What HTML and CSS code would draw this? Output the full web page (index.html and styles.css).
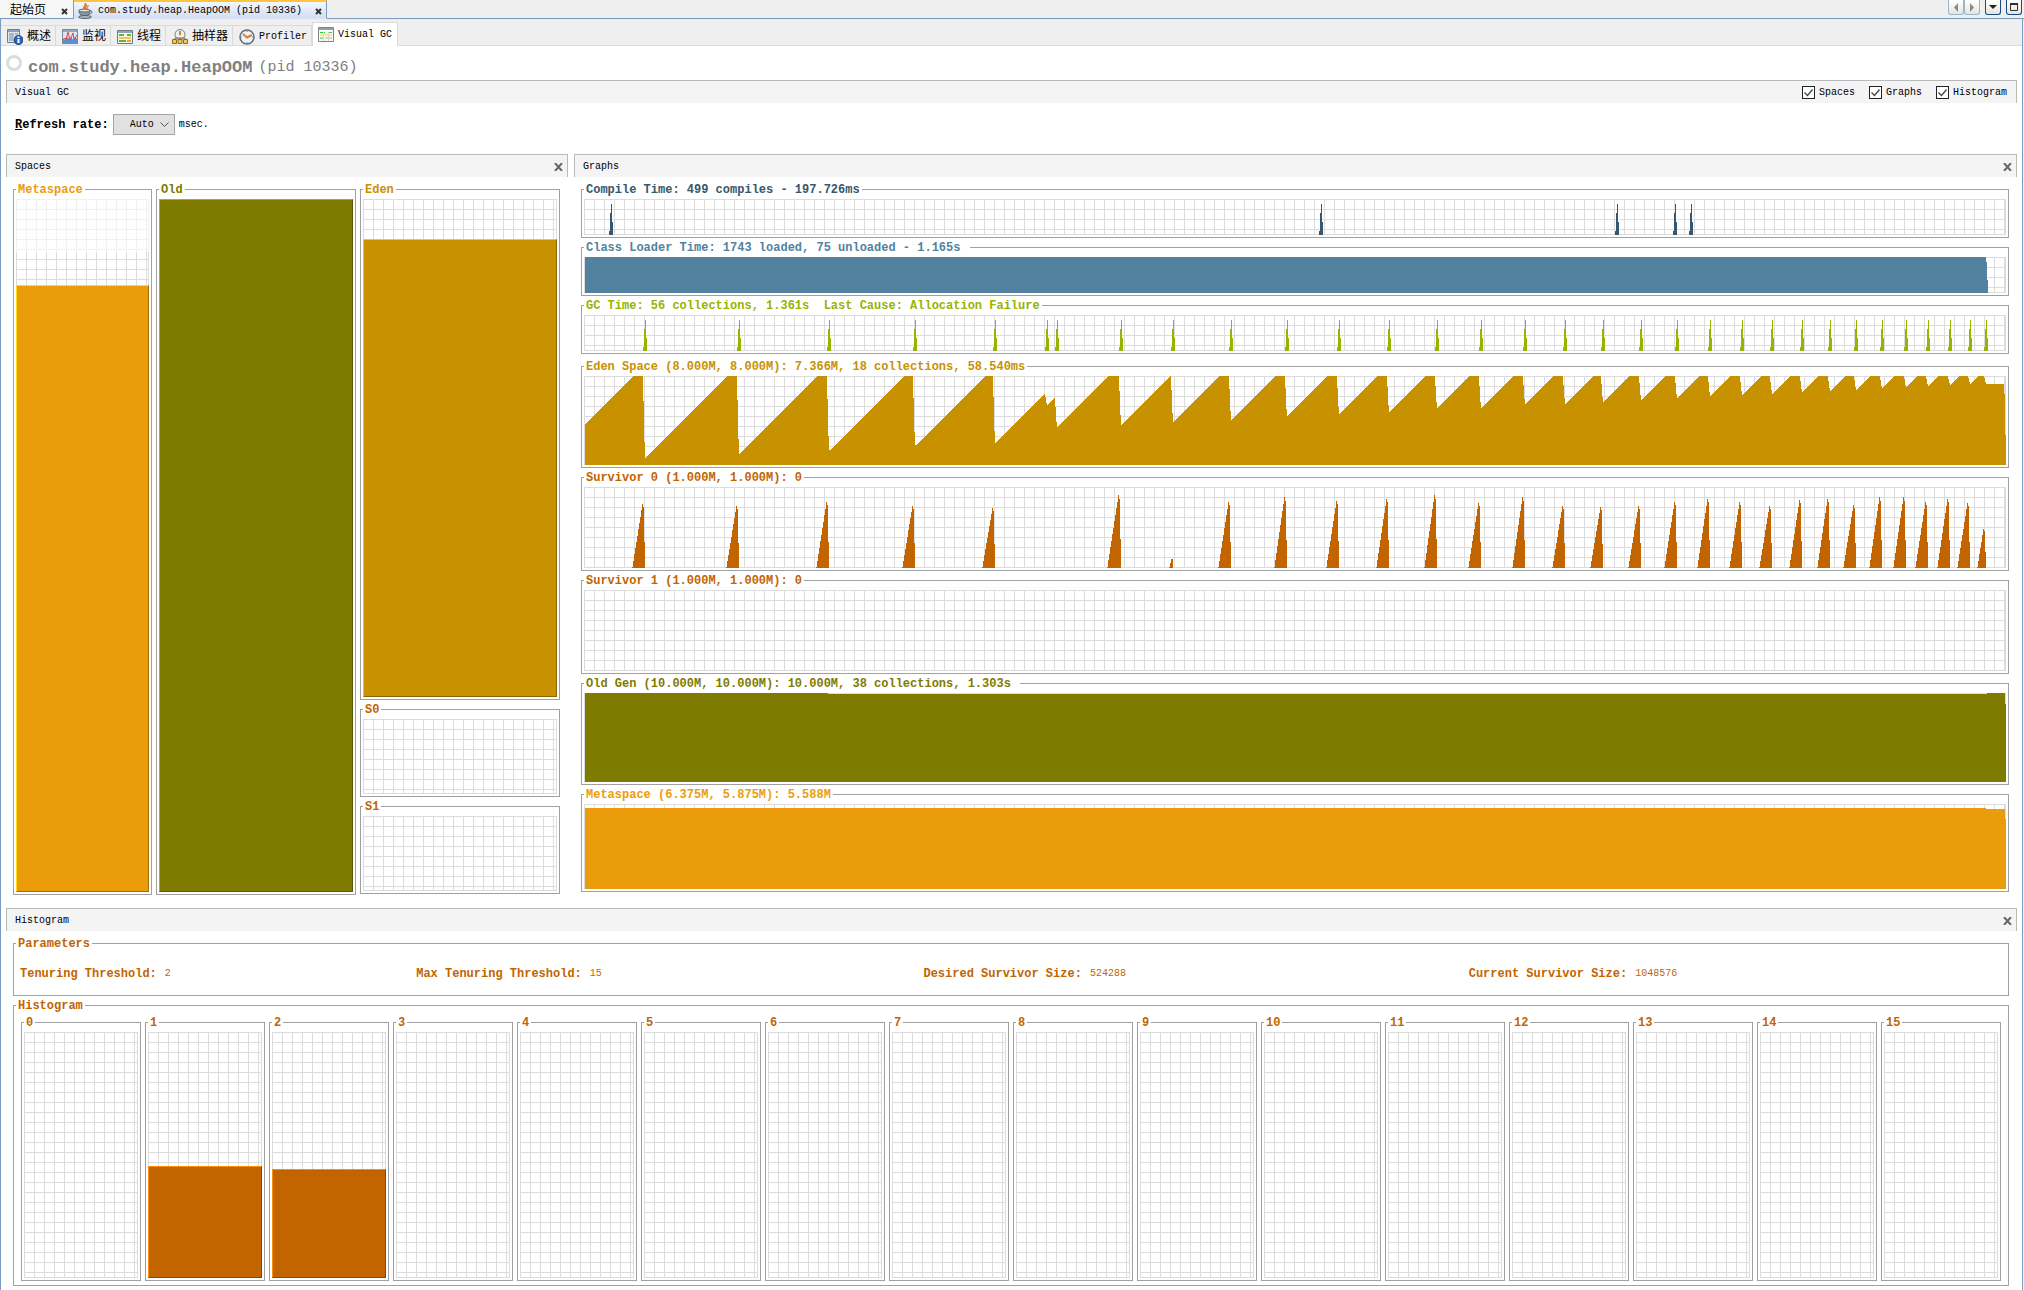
FILE: index.html
```html
<!DOCTYPE html>
<html lang="zh-CN">
<head>
<meta charset="utf-8">
<meta name="viewport" content="width=device-width, initial-scale=1">
<title>Visual GC</title>
<link rel="stylesheet" href="styles.css">
</head>
<body>
<header class="doc-bar">
  <div class="doc-tab">
    <a class="doc-link" href="#start">起始页</a>
    <button class="close" aria-label="关闭"><svg width="7" height="7" viewBox="0 0 7 7"><path d="M1 1l5 5M6 1l-5 5" stroke="#333" stroke-width="2"/></svg></button>
  </div>
  <div class="doc-tab doc-tab-active">
    <svg width="16" height="16" viewBox="0 0 16 16"><path d="M1 7h11c0 4-2 6-5.500 6S1 11 1 7z" fill="#8696a0" stroke="#4b5a63"/><ellipse cx="6.500" cy="7.500" rx="5" ry="1.500" fill="#dfe6ea" stroke="#5c6b74"/><path d="M12 8c3-1 3 3-1 3" fill="none" stroke="#5c6b74"/><ellipse cx="7" cy="14" rx="6.500" ry="1.500" fill="#a9b6bf" stroke="#56656e"/><path d="M6 6c-2-2 2-3 1-6 3 2 0 4 1 6zM9 6c-1-2 2-2 1-4" fill="#f08228" stroke="#dd6a12"/></svg>
    <a class="doc-link" href="#heap">com.study.heap.HeapOOM (pid 10336)</a>
    <button class="close" aria-label="关闭"><svg width="7" height="7" viewBox="0 0 7 7"><path d="M1 1l5 5M6 1l-5 5" stroke="#333" stroke-width="2"/></svg></button>
  </div>
  <div class="doc-tools">
    <div class="pair">
      <button class="tool" aria-label="向左滚动"><svg width="8" height="9" viewBox="0 0 8 9"><path d="M6 0v9L2 4.500z" fill="#8a8a8a"/></svg></button>
      <button class="tool" aria-label="向右滚动"><svg width="8" height="9" viewBox="0 0 8 9"><path d="M2 0v9l4-4.500z" fill="#8a8a8a"/></svg></button>
    </div>
    <button class="tool tool-strong" aria-label="文档列表"><svg width="8" height="4" viewBox="0 0 8 4"><path d="M0 0h8L4 4z" fill="#222"/></svg></button>
    <button class="tool tool-strong" aria-label="最大化"><svg width="8" height="8" viewBox="0 0 8 8"><path d="M.5 1h7v6.500h-7z" fill="none" stroke="#333"/><path d="M0 1h8" stroke="#333" stroke-width="2"/></svg></button>
  </div>
</header>

<div class="window">
  <nav class="views" role="tablist">
    <button class="view" role="tab"><svg width="16" height="16" viewBox="0 0 16 16"><path d="M.5.500h12v13H.5z" fill="#dce4ec" stroke="#6f7f8e"/><path d="M1 2h11" stroke="#8fa4ba" stroke-width="2"/><path d="M2 5h5M2 7h5M2 9h4M2 11h4M8 5h3" stroke="#7a8ea3"/><circle cx="11.500" cy="11" r="4.500" fill="#3163b5" stroke="#1f438a"/><path d="M11.500 10v4M11.500 7.500v1.500" stroke="#fff" stroke-width="2"/></svg>概述</button>
    <button class="view" role="tab"><svg width="16" height="16" viewBox="0 0 16 16"><path d="M.5.500h15v14H.5z" fill="#dbe7f2" stroke="#77889a"/><path d="M1 2h14" stroke="#8fa9c4" stroke-width="2"/><path d="M1 14V9l2 2 2-3 2 2 2-2 2 3 2-3 2 2v4z" fill="#5d8fd0"/><path d="M1 11l2-2 1 2 2-8 2 8 1-2 2-5 1 7 3-5" fill="none" stroke="#d8484a"/></svg>监视</button>
    <button class="view" role="tab"><svg width="16" height="14" viewBox="0 0 16 14"><path d="M.5.500h15v13H.5z" fill="#f4f4ee" stroke="#6c7c88"/><path d="M1 2h14" stroke="#91a5b9" stroke-width="2"/><path d="M2 5h5M10 5h4" stroke="#5ab82c" stroke-width="2"/><path d="M2 8h12" stroke="#f0c84a" stroke-width="2"/><path d="M2 11h7" stroke="#5ab82c" stroke-width="2"/><path d="M10 11h4" stroke="#e8a33a" stroke-width="2"/></svg>线程</button>
    <button class="view" role="tab"><svg width="16" height="16" viewBox="0 0 16 16"><circle cx="8" cy="5.500" r="5" fill="#e8f0f6" stroke="#70808e"/><path d="M8 2v4" stroke="#e57a20" stroke-width="2"/><path d="M3 10v-1h10v1M8 9v1" fill="none" stroke="#8a6a2a"/><path d="M.5 10.500h4v4h-4zM6 10.500h4v4H6zM11.500 10.500h4v4h-4z" fill="#f5c65a" stroke="#96681a"/></svg>抽样器</button>
    <button class="view view-latin" role="tab"><svg width="16" height="16" viewBox="0 0 16 16"><circle cx="8" cy="8" r="7" fill="#eef3f8" stroke="#5f6e7b" stroke-width="1.500"/><path d="M8 2v1M8 13v1M2 8h1M13 8h1" stroke="#7a8792"/><path d="M4 5l4 3.500L13 6" fill="none" stroke="#e07b38" stroke-width="2"/></svg>Profiler</button>
    <button class="view view-latin view-active" role="tab" aria-selected="true"><svg width="16" height="15" viewBox="0 0 16 15"><path d="M.5.500h15v14H.5z" fill="#fafaf4" stroke="#7c858c"/><path d="M1 2h14" stroke="#93a1ae" stroke-width="2"/><path d="M2 5.500h5M10 5.500h4" stroke="#2fd02f"/><path d="M2 8h12" stroke="#e8d870"/><path d="M2 11h4" stroke="#2fd02f"/><path d="M7 11h7" stroke="#f0a850"/><path d="M5.500 5v9M10.500 5v9" stroke="#d8d8d0"/></svg>Visual GC</button>
  </nav>

  <main class="content">
    <h1 class="title"><span class="ring"></span><b>com.study.heap.HeapOOM</b><span class="pid">(pid 10336)</span></h1>

    <div class="bar">
      <h2 class="bar-title">Visual GC</h2>
      <div class="toggles">
        <label class="toggle"><input type="checkbox" checked>Spaces</label>
        <label class="toggle"><input type="checkbox" checked>Graphs</label>
        <label class="toggle"><input type="checkbox" checked>Histogram</label>
      </div>
    </div>

    <div class="refresh">
      <label class="refresh-label" for="rate"><u>R</u>efresh rate:</label>
      <select id="rate" class="rate"><option>Auto</option></select>
      <span>msec.</span>
    </div>

    <div class="panels">
      <section>
        <div class="bar"><h2 class="bar-title">Spaces</h2><button class="close" aria-label="Close Spaces"><svg width="9" height="8" viewBox="0 0 9 8"><path d="M1 0l7 8M8 0L1 8" stroke="#666" stroke-width="2"/></svg></button></div>
        <div class="spaces">
          <fieldset class="box c-meta"><legend>Metaspace</legend><div class="grid reserved"><div class="fill" style="height:87.6%"></div></div></fieldset>
          <fieldset class="box c-old"><legend>Old</legend><div class="grid"><div class="fill" style="height:100%"></div></div></fieldset>
          <div class="young">
            <fieldset class="box grow c-eden"><legend>Eden</legend><div class="grid"><div class="fill" style="height:92%"></div></div></fieldset>
            <fieldset class="box c-surv"><legend>S0</legend><div class="grid survivor"></div></fieldset>
            <fieldset class="box c-surv"><legend>S1</legend><div class="grid survivor"></div></fieldset>
          </div>
        </div>
      </section>

      <section>
        <div class="bar"><h2 class="bar-title">Graphs</h2><button class="close" aria-label="Close Graphs"><svg width="9" height="8" viewBox="0 0 9 8"><path d="M1 0l7 8M8 0L1 8" stroke="#666" stroke-width="2"/></svg></button></div>
        <div class="graphs">
          <fieldset class="box c-compile"><legend>Compile Time: 499 compiles - 197.726ms</legend><div class="grid"><svg class="plot h36" data-plot="compile" viewBox="0 0 1422 36" preserveAspectRatio="none"></svg></div></fieldset>
          <fieldset class="box c-class"><legend>Class Loader Time: 1743 loaded, 75 unloaded - 1.165s&nbsp;</legend><div class="grid"><svg class="plot h36" data-plot="classes" viewBox="0 0 1422 36" preserveAspectRatio="none"></svg></div></fieldset>
          <fieldset class="box c-gc"><legend>GC Time: 56 collections, 1.361s&nbsp; Last Cause: Allocation Failure</legend><div class="grid"><svg class="plot h36" data-plot="gc" viewBox="0 0 1422 36" preserveAspectRatio="none"></svg></div></fieldset>
          <fieldset class="box memory c-eden"><legend>Eden Space (8.000M, 8.000M): 7.366M, 18 collections, 58.540ms</legend><div class="grid"><svg class="plot h89" data-plot="eden" viewBox="0 0 1422 89" preserveAspectRatio="none"></svg></div></fieldset>
          <fieldset class="box c-surv"><legend>Survivor 0 (1.000M, 1.000M): 0</legend><div class="grid"><svg class="plot h81" data-plot="survivor" viewBox="0 0 1422 81" preserveAspectRatio="none"></svg></div></fieldset>
          <fieldset class="box c-surv"><legend>Survivor 1 (1.000M, 1.000M): 0</legend><div class="grid"><svg class="plot h81" viewBox="0 0 1422 81"></svg></div></fieldset>
          <fieldset class="box c-old"><legend>Old Gen (10.000M, 10.000M): 10.000M, 38 collections, 1.303s&nbsp;</legend><div class="grid"><svg class="plot h89" data-plot="old" viewBox="0 0 1422 89" preserveAspectRatio="none"></svg></div></fieldset>
          <fieldset class="box c-meta"><legend>Metaspace (6.375M, 5.875M): 5.588M</legend><div class="grid"><svg class="plot h85" data-plot="meta" viewBox="0 0 1422 85" preserveAspectRatio="none"></svg></div></fieldset>
        </div>
      </section>
    </div>

    <section>
      <div class="bar"><h2 class="bar-title">Histogram</h2><button class="close" aria-label="Close Histogram"><svg width="9" height="8" viewBox="0 0 9 8"><path d="M1 0l7 8M8 0L1 8" stroke="#666" stroke-width="2"/></svg></button></div>
      <div class="histogram">
        <fieldset class="box c-surv"><legend>Parameters</legend>
          <dl class="params">
            <div class="param"><dt>Tenuring Threshold:</dt><dd>2</dd></div>
            <div class="param"><dt>Max Tenuring Threshold:</dt><dd>15</dd></div>
            <div class="param"><dt>Desired Survivor Size:</dt><dd>524288</dd></div>
            <div class="param"><dt>Current Survivor Size:</dt><dd>1048576</dd></div>
          </dl>
        </fieldset>
        <fieldset class="box c-surv"><legend>Histogram</legend><div class="bins" id="bins"></div></fieldset>
      </div>
    </section>
  </main>
</div>
<script src="charts.js"></script>
</body>
</html>
```
FILE: styles.css
```css
* { box-sizing: border-box; }
body {
  margin: 0;
  background: #f0f0f0;
  color: #000;
  font: 10px/14px "Liberation Mono", "Noto Sans CJK SC", monospace;
}
h1, h2, dl, dd { margin: 0; font-weight: normal; }
button { margin: 0; padding: 0; border: 0; background: none; font: inherit; color: inherit; }
svg { flex: none; display: block; }

/* document tabs */
.doc-bar { display: flex; height: 19px; border-bottom: 1px solid #7a9cc0; background: #efefef; }
.doc-tab { display: flex; align-items: center; padding: 4px 5px 0 10px; margin-bottom: -1px; border-right: 1px solid #7a9cc0; border-bottom: 1px solid #7a9cc0; background: #f6f6f6; font-size: 12px; gap: 15px; }
.doc-tab-active { gap: 4px; padding: 2px 4px 0 4px; border-top: 2px solid #ffc43c; border-bottom-color: #dbe4f6; background: linear-gradient(#f4f7fd, #d2def4); font-size: 10px; }
.doc-tab-active .close { margin-left: 9px; }
.doc-link { color: #000; text-decoration: none; white-space: nowrap; }
.doc-tools { display: flex; gap: 5px; margin-left: auto; padding-right: 2px; }
.pair { display: flex; }
.tool { display: flex; align-items: center; justify-content: center; width: 16px; height: 15px; border: 1px solid #9db4cd; border-top: 0; border-radius: 0 0 3px 3px; background: linear-gradient(#fff, #e6e6e0); }
.tool-strong { border-color: #1c4a7e; }

/* view tabs */
.window { margin-right: 1px; border: solid #7a9cc0; border-width: 0 1px; background: #fff; }
.views { display: flex; align-items: flex-end; height: 27px; padding-top: 4px; border-top: 1px solid #f6ecd0; border-bottom: 1px solid #dadada; background: #efefef; }
.view { display: flex; align-items: center; height: 20px; gap: 4px; padding: 2px 4px 0 6px; border-top: 1px solid #dadada; border-right: 1px solid #dadada; font-size: 12px; white-space: nowrap; }
.view-latin { font-size: 10px; }
.view-active { height: 24px; margin-bottom: -1px; padding: 0 5px; border-left: 1px solid #dadada; background: #fff; }

.content { padding: 0 5px 4px; }
.title { display: flex; align-items: center; height: 34px; gap: 6px; padding-top: 10px; color: #808080; font-size: 15px; line-height: 20px; }
.title b { font-size: 17px; }
.ring { width: 16px; height: 16px; margin-bottom: 10px; border: 3px solid #dcdcdf; border-radius: 50%; }

.bar { display: flex; align-items: center; justify-content: space-between; height: 23px; padding: 1px 4px 0 8px; border: 1px solid #b9b9b9; border-bottom: 0; background: #f4f4f4; }
.bar-title { font-size: 10px; line-height: 16px; }
.close { display: flex; }
.toggles { display: flex; gap: 14px; padding-right: 5px; }
.toggle { display: flex; align-items: center; gap: 4px; }
.toggle input {
  appearance: none; width: 13px; height: 13px; margin: 0; border: 1px solid #222;
  background: #fff url("data:image/svg+xml,%3Csvg xmlns='http://www.w3.org/2000/svg' viewBox='0 0 11 11'%3E%3Cpath d='M1.500 5.500l3 3 5-6' fill='none' stroke='%23444' stroke-width='1.300'/%3E%3C/svg%3E");
}

.refresh { display: flex; align-items: center; gap: 4px; height: 51px; padding: 0 10px 8px 9px; }
.refresh-label { font-size: 12px; font-weight: bold; }
.rate {
  appearance: none; width: 62px; height: 21px; padding: 0 16px; border: 1px solid #a6a6a6; border-radius: 0; color: #000; font: inherit;
  background: #e1e1e1 url("data:image/svg+xml,%3Csvg xmlns='http://www.w3.org/2000/svg' viewBox='0 0 9 6'%3E%3Cpath d='M.5.500l4 4 4-4' fill='none' stroke='%23555'/%3E%3C/svg%3E") right 5px center / 9px 6px no-repeat;
}

/* titled boxes and graph paper */
.panels { display: grid; grid-template-columns: 562fr 1443fr; gap: 6px; }
.panels > section { display: flex; flex-direction: column; }
.box { display: flex; flex-direction: column; min-width: 0; margin: 0; padding: 2px; border: 1px solid #a0a0a0; }
.box legend { height: 15px; padding: 0 2px; font-size: 12px; font-weight: bold; line-height: 17px; white-space: nowrap; }
.grid {
  display: flex; flex: 1; flex-direction: column; justify-content: flex-end;
  background:
    linear-gradient(#dcdcdc, #dcdcdc) right / 1px 100% no-repeat,
    linear-gradient(#dcdcdc, #dcdcdc) bottom / 100% 1px no-repeat,
    linear-gradient(to right, #dcdcdc 1px, transparent 1px) 0 0 / 10px 10px,
    linear-gradient(#dcdcdc 1px, transparent 1px) 0 0 / 10px 10px;
}
.reserved {
  background:
    linear-gradient(rgba(255, 255, 255, .6), rgba(255, 255, 255, .6)) top / 100% 53px no-repeat,
    linear-gradient(#dcdcdc, #dcdcdc) right / 1px 100% no-repeat,
    linear-gradient(to right, #dcdcdc 1px, transparent 1px) 0 0 / 10px 10px,
    linear-gradient(#dcdcdc 1px, transparent 1px) 0 0 / 10px 10px;
}
.fill { border: 1px solid; border-color: var(--light) var(--dark) var(--dark) var(--light); background: currentColor; }

.c-compile { color: #35586c; }
.c-class { color: #5282a0; }
.c-gc { color: #96b400; }
.c-eden { color: #c89100; --light: #ffc800; --dark: #8c6500; }
.c-surv { color: #c26500; --light: #ff9000; --dark: #874600; }
.c-old { color: #7f7b00; --light: #b5af00; --dark: #585600; }
.c-meta { color: #eb9c0a; --light: #ffde0e; --dark: #a46d07; }

.spaces { display: grid; flex: 1; grid-template-columns: 139fr 200fr 200fr; gap: 4px; padding: 5px 8px 13px 7px; }
.young { display: flex; flex-direction: column; gap: 2px; padding-bottom: 1px; }
.grow { flex: 1; }
.survivor { min-height: 75px; }
.graphs { display: flex; flex-direction: column; gap: 2px; padding: 5px 8px 16px 7px; }
.memory { margin-top: 3px; }
.plot { width: 100%; fill: currentColor; shape-rendering: crispEdges; }
.h36 { height: 36px; }
.h81 { height: 81px; }
.h85 { height: 85px; }
.h89 { height: 89px; }

/* histogram */
.histogram { display: flex; flex-direction: column; gap: 2px; padding: 5px 8px 0 7px; }
.params { display: grid; grid-template-columns: 396fr 507fr 545fr 533fr; align-items: center; height: 40px; padding: 2px 4px 0; }
.param { display: flex; gap: 8px; }
.param dt { font-size: 12px; font-weight: bold; }
.bins { display: flex; gap: 4px; padding: 0 5px 2px; }
.bins .box { flex: 1; }
.bins .grid { height: 246px; flex: none; }
```
FILE: charts.js
```js
const ORIGIN = 584;

// columns: [x, top] pairs, each one pixel wide and reaching the baseline
const columns = (list, h) =>
  list.map(([x, top]) => `M${x - ORIGIN} ${top}h1V${h}h-1z`).join("");

const area = (points, h) =>
  "M" + points.map(([x, y]) => `${x - ORIGIN} ${y}`).join("L") +
  `V${h}H${points[0][0] - ORIGIN}z`;

const spikes = xs =>
  columns(xs.flatMap(x => [[x - 2, 32], [x - 1, 14], [x, 5], [x + 1, 23]]), 36);

const compile = [611, 1321, 1617, 1675, 1691];
const gc = [645, 739, 829, 915, 995, 1047, 1057, 1121, 1173, 1231, 1287, 1339,
  1389, 1437, 1481, 1525, 1565, 1603, 1641, 1677, 1710, 1742, 1772, 1802, 1830,
  1856, 1882, 1906, 1928, 1950, 1970, 1986];

// [x where the rise ends, its level, x of the drop, level after the drop]
const edenCycles = [
  [633, 0, 645, 82], [727, 0, 739, 78], [817, 0, 829, 75], [905, 0, 915, 70],
  [986, 0, 995, 68], [1044, 18, 1047, 29], [1054, 22, 1057, 52],
  [1108, 0, 1121, 49], [1170, 0, 1173, 46], [1219, 0, 1231, 44],
  [1275, 0, 1287, 41], [1327, 0, 1339, 38], [1377, 0, 1389, 36],
  [1425, 0, 1437, 33], [1469, 0, 1481, 32], [1513, 0, 1525, 29],
  [1553, 0, 1565, 28], [1593, 0, 1603, 26], [1629, 0, 1641, 24],
  [1665, 0, 1677, 22], [1699, 0, 1710, 20], [1731, 0, 1742, 19],
  [1762, 0, 1772, 18], [1790, 0, 1802, 16], [1818, 0, 1830, 15],
  [1846, 0, 1856, 14], [1870, 0, 1882, 12], [1894, 0, 1906, 11],
  [1918, 0, 1928, 10], [1938, 0, 1950, 9], [1960, 0, 1970, 8], [1978, 0, 1986, 8]];
const eden = [[585, 49]];
for (const [rise, top, drop, low] of edenCycles) {
  eden.push([rise, top], [drop - 2, top], [drop - 1, top + (low - top) * 0.6], [drop, low]);
}
eden.push([2004, 8], [2004, 18], [2005, 18], [2005, 59], [2006, 59]);

// [peak x, top, rise length]
const survivorPeaks = [
  [642, 17], [736, 19], [826, 15], [912, 19], [992, 21], [1118, 8, 11], [1171, 72, 2],
  [1228, 15], [1284, 10], [1336, 14], [1386, 12], [1434, 8], [1478, 16], [1522, 10],
  [1562, 19], [1600, 20], [1638, 19], [1674, 15], [1707, 12], [1739, 15], [1769, 19],
  [1799, 13], [1827, 12], [1853, 18], [1879, 10], [1903, 10], [1925, 15], [1947, 12],
  [1967, 16], [1983, 42, 6]];
const survivor = survivorPeaks.flatMap(([x, top, rise = 10]) => {
  const cols = [];
  for (let i = 0; i <= rise; i++) cols.push([x - i, Math.round(top + (80 - top) * i / rise)]);
  const h = 81 - top;
  cols.push([x + 1, top + Math.round(h * 0.05)]);
  if (rise > 2) cols.push([x + 2, 81 - Math.round(h * 0.4)]);
  return cols;
});

const plots = {
  compile: spikes(compile),
  classes: area([[585, 0], [1986, 0], [1986, 5], [1987, 5], [1987, 23], [1988, 23]], 36),
  gc: spikes(gc),
  eden: area(eden, 89),
  survivor: columns(survivor, 81),
  old: area([[585, 0], [828, 0], [828, 1], [1987, 1], [1987, 0], [2005, 0], [2005, 11],
    [2006, 11], [2006, 56], [2007, 56]], 89),
  meta: area([[585, 4], [1986, 4], [1986, 5], [2005, 5], [2005, 15], [2006, 15],
    [2006, 55], [2007, 55]], 85)
};
document.querySelectorAll("[data-plot]").forEach(svg => {
  svg.innerHTML = `<path d="${plots[svg.dataset.plot]}"/>`;
});

const ages = { 1: 45.5, 2: 44.3 };
document.getElementById("bins").innerHTML = Array.from({ length: 16 }, (_, i) =>
  `<fieldset class="box c-surv"><legend>${i}</legend><div class="grid">` +
  (ages[i] ? `<div class="fill" style="height:${ages[i]}%"></div>` : "") +
  "</div></fieldset>").join("");
```
